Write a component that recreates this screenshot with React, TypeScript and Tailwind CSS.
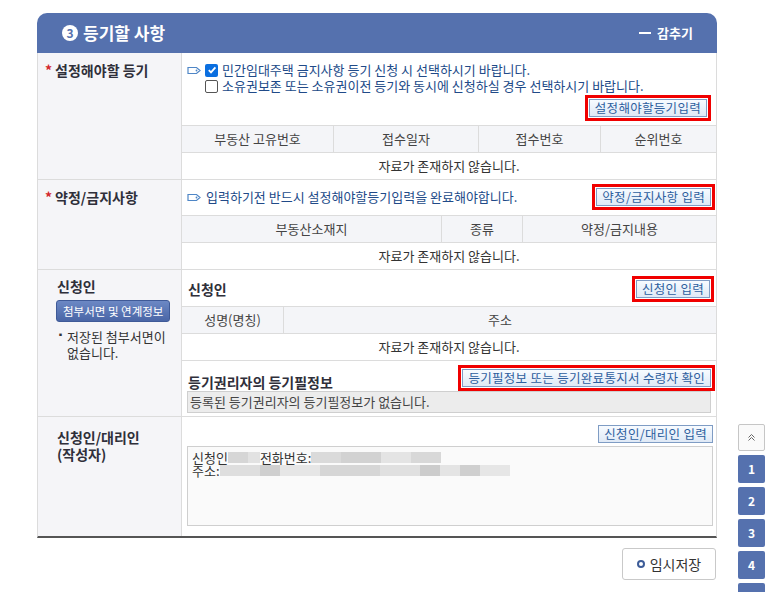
import React from "react";

const font = { fontFamily: '"Noto Sans CJK KR", "Noto Sans", sans-serif' };

function TagIcon() {
  return (
    <svg width="14" height="9" viewBox="0 0 14 9" className="shrink-0">
      <path d="M1 1.5h8.5l3.5 3-3.5 3H1z" fill="none" stroke="#4f86c6" strokeWidth="1.2" />
      <circle cx="9.5" cy="4.5" r="0.9" fill="#4f86c6" />
    </svg>
  );
}

function Check({ checked }: { checked: boolean }) {
  return checked ? (
    <span className="flex h-[13px] w-[13px] shrink-0 items-center justify-center rounded-[2px] bg-[#0b6fe0]">
      <svg width="10" height="10" viewBox="0 0 10 10">
        <path d="M1.8 5.2l2.2 2.2 4.4-5" fill="none" stroke="white" strokeWidth="1.8" />
      </svg>
    </span>
  ) : (
    <span className="h-[13px] w-[13px] shrink-0 rounded-[2px] border border-[#555] bg-white" />
  );
}

function InputButton({ label, boxed = true }: { label: string; boxed?: boolean }) {
  const btn = (
    <span className="block border border-[#7f9cc4] bg-gradient-to-b from-[#f7fbff] to-[#dfe9f6] px-[5px] py-[1px] text-[12.5px] leading-[14px] tracking-[0.3px] text-[#2d5e9e]">
      {label}
    </span>
  );
  if (!boxed) return <span className="block py-[1px]">{btn}</span>;
  return <span className="block border-[3px] border-[#f00000] p-[1px]">{btn}</span>;
}

function Label({ text, req = false }: { text: React.ReactNode; req?: boolean }) {
  return (
    <div className="flex border-r border-[#dcdcdc] bg-[#f5f5f8] pl-[7px] pt-[9px] text-[14px] font-bold leading-[17px] text-[#2f2f3a]">
      {req ? <span className="mr-[3px] text-[#d3262c]">*</span> : <span className="w-[12px]" />}
      <span>{text}</span>
    </div>
  );
}

function EmptyRow({ border = true }: { border?: boolean }) {
  return (
    <div
      className={`flex items-center justify-center text-[13px] text-[#333] ${
        border ? "h-[27px] border-b border-[#dcdcdc]" : "h-[26px]"
      }`}
    >
      자료가 존재하지 않습니다.
    </div>
  );
}

function HeadRow({ cols, widths }: { cols: string[]; widths: string }) {
  return (
    <div className={`grid ${widths} h-[28px] border-y border-[#dcdcdc] bg-[#f4f5f8] text-[13px] text-[#444]`}>
      {cols.map((c, i) => (
        <div key={c} className={`flex items-center justify-center ${i > 0 ? "border-l border-[#dcdcdc]" : ""}`}>
          {c}
        </div>
      ))}
    </div>
  );
}

function Blur({ w, c }: { w: number; c: string }) {
  return <span className="inline-block h-[11px] align-middle" style={{ width: w, background: c }} />;
}

export default function App() {
  return (
    <div className="relative h-[592px] w-[769px] overflow-hidden bg-white" style={font}>
      <div className="ml-[37px] mt-[13px] w-[680px]">
        <div className="flex h-[40px] items-center justify-between rounded-t-[10px] bg-[#5571ae] pl-[25px] pr-[24px] text-white">
          <div className="flex items-center gap-[5px] text-[17px] font-bold">
            <span className="flex h-[16px] w-[16px] items-center justify-center rounded-full bg-white text-[12px] font-bold text-[#5571ae]">
              3
            </span>
            등기할 사항
          </div>
          <div className="flex items-center gap-[6px] text-[13px] font-bold">
            <span className="h-[2px] w-[12px] bg-white" />
            감추기
          </div>
        </div>

        <div className="border-x border-b-2 border-[#dcdcdc] border-b-[#555]">
          {/* row 1 */}
          <div className="grid grid-cols-[144px_1fr] border-b border-[#dcdcdc]">
            <Label text="설정해야할 등기" req />
            <div>
              <div className="px-[5px] pt-[9px] text-[13px] leading-[16px] text-[#214a88]">
                <div className="flex items-center gap-[4px]">
                  <TagIcon />
                  <Check checked />
                  <span>민간임대주택 금지사항 등기 신청 시 선택하시기 바랍니다.</span>
                </div>
                <div className="flex items-center gap-[4px] pl-[18px]">
                  <Check checked={false} />
                  <span>소유권보존 또는 소유권이전 등기와 동시에 신청하실 경우 선택하시기 바랍니다.</span>
                </div>
                <div className="mt-[1px] flex justify-end pb-[4px]">
                  <InputButton label="설정해야할등기입력" />
                </div>
              </div>
              <HeadRow cols={["부동산 고유번호", "접수일자", "접수번호", "순위번호"]} widths="grid-cols-[151px_145px_122px_1fr]" />
              <EmptyRow border={false} />
            </div>
          </div>

          {/* row 2 */}
          <div className="grid grid-cols-[144px_1fr] border-b border-[#dcdcdc]">
            <Label text="약정/금지사항" req />
            <div>
              <div className="flex items-center justify-between pb-[5px] pl-[5px] pr-[1px] pt-[4px] text-[13px] text-[#214a88]">
                <div className="flex items-center gap-[5px]">
                  <TagIcon />
                  <span>입력하기전 반드시 설정해야할등기입력을 완료해야합니다.</span>
                </div>
                <InputButton label="약정/금지사항 입력" />
              </div>
              <HeadRow cols={["부동산소재지", "종류", "약정/금지내용"]} widths="grid-cols-[259px_81px_1fr]" />
              <EmptyRow border={false} />
            </div>
          </div>

          {/* row 3 */}
          <div className="grid grid-cols-[144px_1fr] border-b border-[#dcdcdc]">
            <div className="border-r border-[#dcdcdc] bg-[#f5f5f8] pl-[18px] pt-[8px]">
              <div className="pl-[1px] text-[14px] font-bold leading-[17px] text-[#2f2f3a]">신청인</div>
              <div className="mt-[5px] inline-block rounded-[3px] border border-[#3f5a98] bg-gradient-to-b from-[#6c88c4] to-[#4a66a6] px-[6px] py-[3px] text-[11.5px] leading-[14px] text-white">
                첨부서면 및 연계정보
              </div>
              <div className="mt-[7px] flex text-[13px] leading-[16px] text-[#333]">
                <span className="mr-[2px] text-[9px] leading-[12px]">▪</span>
                <span>
                  저장된 첨부서면이
                  <br />
                  없습니다.
                </span>
              </div>
            </div>
            <div>
              <div className="flex items-center justify-between pb-[4px] pl-[6px] pr-[2px] pt-[6px]">
                <span className="text-[14px] font-bold text-[#2f2f3a]">신청인</span>
                <InputButton label="신청인 입력" />
              </div>
              <HeadRow cols={["성명(명칭)", "주소"]} widths="grid-cols-[101px_1fr]" />
              <EmptyRow />
              <div className="flex items-end justify-between pl-[6px] pr-[1px] pt-[4px]">
                <span className="text-[14px] font-bold leading-[18px] text-[#2f2f3a]">등기권리자의 등기필정보</span>
                <InputButton label="등기필정보 또는 등기완료통지서 수령자 확인" />
              </div>
              <div className="mx-[5px] mb-[3px] flex h-[22px] items-center border border-[#cfcfcf] bg-[#ececec] pl-[2px] text-[13px] text-[#444]">
                등록된 등기권리자의 등기필정보가 없습니다.
              </div>
            </div>
          </div>

          {/* row 4 */}
          <div className="grid grid-cols-[144px_1fr]">
            <div className="border-r border-[#dcdcdc] bg-[#f5f5f8] pl-[19px] pt-[12px] text-[14px] font-bold leading-[17px] text-[#2f2f3a]">
              신청인/대리인
              <br />
              (작성자)
            </div>
            <div className="pb-[10px] pl-[5px] pr-[3px] pt-[7px]">
              <div className="flex justify-end">
                <InputButton label="신청인/대리인 입력" boxed={false} />
              </div>
              <div className="mt-[2px] h-[80px] border border-[#cfcfcf] bg-[#fafafa] px-[4px] pt-[4px] text-[13px] leading-[13px] text-[#333]">
                <div className="flex items-center">
                  신청인 <Blur w={20} c="#d6d6d6" />
                  <Blur w={12} c="#e2e2e2" />
                  전화번호:
                  <Blur w={30} c="#dadada" />
                  <Blur w={40} c="#d2d2d2" />
                  <Blur w={30} c="#e4e4e4" />
                  <Blur w={30} c="#d8d8d8" />
                </div>
                <div className="flex items-center">
                  주소: <Blur w={40} c="#dedede" />
                  <Blur w={20} c="#cfcfcf" />
                  <Blur w={40} c="#e6e6e6" />
                  <Blur w={60} c="#d6d6d6" />
                  <Blur w={40} c="#e0e0e0" />
                  <Blur w={20} c="#cccccc" />
                  <Blur w={20} c="#e4e4e4" />
                  <Blur w={20} c="#cfcfcf" />
                  <Blur w={30} c="#e6e6e6" />
                </div>
              </div>
            </div>
          </div>
        </div>

        <div className="mt-[10px] flex justify-end">
          <div className="mr-[1px] flex h-[32px] w-[94px] items-center justify-center gap-[5px] rounded-[3px] border border-[#c9c9c9] bg-white text-[14px] text-[#333]">
            <span className="h-[8px] w-[8px] rounded-full border-2 border-[#3d5c98]" />
            임시저장
          </div>
        </div>
      </div>

      {/* side nav */}
      <div className="absolute left-[738px] top-[424px] flex flex-col gap-[4px]">
        <div className="flex h-[27px] w-[27px] items-center justify-center rounded-[2px] border border-[#c6c6c6] bg-[#fafafa]">
          <svg width="9" height="9" viewBox="0 0 9 9">
            <path d="M1.5 4.5l3-3 3 3M1.5 7.5l3-3 3 3" fill="none" stroke="#666" strokeWidth="1" />
          </svg>
        </div>
        {["1", "2", "3", "4", "5"].map((n) => (
          <div key={n} className="flex h-[28px] w-[27px] items-center justify-center rounded-[2px] bg-[#5571ae] text-[12px] font-bold text-white">
            {n}
          </div>
        ))}
      </div>
    </div>
  );
}
